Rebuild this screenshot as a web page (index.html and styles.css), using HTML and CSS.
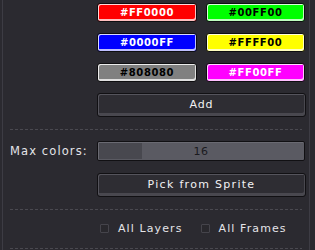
FILE: index.html
```html
<!DOCTYPE html>
<html>
<head>
<meta charset="utf-8">
<link rel="stylesheet" href="styles.css">
</head>
<body>
<div class="panel">
  <div class="controls">
    <div class="swatches">
      <div class="cbtn red">#FF0000</div>
      <div class="cbtn green">#00FF00</div>
      <div class="cbtn blue">#0000FF</div>
      <div class="cbtn yellow">#FFFF00</div>
      <div class="cbtn gray">#808080</div>
      <div class="cbtn magenta">#FF00FF</div>
    </div>
    <div class="btn add">Add</div>
  </div>
  <div class="sep"></div>
  <div class="row maxrow">
    <div class="label">Max colors:</div>
    <div class="slider"><div class="fill"></div><span class="val">16</span></div>
  </div>
  <div class="controls">
    <div class="btn pick">Pick from Sprite</div>
  </div>
  <div class="sep"></div>
  <div class="checks">
    <div class="check"><span class="box"></span>All Layers</div>
    <div class="check"><span class="box"></span>All Frames</div>
  </div>
  <div class="sep last"></div>
</div>
</body>
</html>
```

FILE: styles.css
```css
html, body {
  margin: 0;
  padding: 0;
  background: #2b2a30;
}
body {
  width: 315px;
  height: 250px;
  overflow: hidden;
  font-family: "DejaVu Sans", sans-serif;
  font-size: 11px;
  color: #e8e8ec;
}
.panel {
  margin-left: 2px;
  width: 308px;
  height: 250px;
  border-left: 1px solid #3d3c44;
  border-right: 1px solid #3d3c44;
  box-sizing: border-box;
  padding-top: 3px;
}
.controls {
  margin-left: 94px;
  width: 209px;
}
.swatches {
  display: grid;
  grid-template-columns: 100px 99px;
  column-gap: 9px;
  row-gap: 11px;
  width: 208px;
}
.cbtn {
  height: 19px;
  box-sizing: border-box;
  border-radius: 3px;
  border: 1px solid #0e0e10;
  display: flex;
  align-items: center;
  justify-content: center;
  font-weight: bold;
  font-size: 10px;
  letter-spacing: 0.6px;
  box-shadow: inset 1px 1px 0 rgba(255,255,255,0.85), inset -1px -2px 0 rgba(255,255,255,0.75);
}
.red { background: #ff0000; color: #fff; }
.green { background: #00ff00; color: #000; }
.blue { background: #0000ff; color: #fff; }
.yellow { background: #ffff00; color: #000; }
.gray { background: #808080; color: #000; }
.magenta { background: #ff00ff; color: #fff; }
.btn {
  height: 24px;
  box-sizing: border-box;
  border: 1px solid #111013;
  border-radius: 3px;
  background: #2e2d33;
  box-shadow: inset 1px 1px 0 #55545c, inset -1px -3px 0 #49484f;
  display: flex;
  align-items: center;
  justify-content: center;
  padding-bottom: 2px;
  color: #f2f2f4;
  letter-spacing: 0.9px;
  font-size: 11px;
}
.add { margin-top: 11px; }
.sep {
  margin: 12px 7px 0 7px;
  height: 1px;
  background: repeating-linear-gradient(to right, #4a4950 0 3px, transparent 3px 5px);
}
.row {
  display: flex;
  align-items: center;
}
.maxrow {
  margin-top: 11px;
}
.label {
  width: 94px;
  padding-left: 7px;
  box-sizing: border-box;
  letter-spacing: 1.1px;
  font-size: 11.5px;
  color: #e4e4e8;
}
.slider {
  position: relative;
  width: 208px;
  height: 20px;
  box-sizing: border-box;
  border: 1px solid #111013;
  border-radius: 2px;
  background: #5a5a62;
  box-shadow: inset 1px 1px 0 #6a6a72;
  display: flex;
  align-items: center;
  justify-content: center;
}
.fill {
  position: absolute;
  left: 1px;
  top: 1px;
  bottom: 1px;
  width: 43px;
  background: #48484f;
}
.val {
  position: relative;
  color: #1b1b1f;
  font-size: 11px;
  letter-spacing: 0.5px;
}
.pick {
  margin-top: 12px;
  letter-spacing: 1.3px;
}
.checks {
  display: flex;
  align-items: center;
  gap: 18px;
  margin-left: 97px;
  height: 36px;
  padding-bottom: 2px;
}
.check {
  display: flex;
  align-items: center;
  gap: 9px;
  letter-spacing: 1.1px;
  font-size: 11px;
  color: #e4e4e8;
}
.box {
  width: 9px;
  height: 9px;
  box-sizing: border-box;
  border: 1px solid #45444b;
  border-radius: 1px;
  background: #29282d;
}
.sep.last { margin-top: 0; }
```
